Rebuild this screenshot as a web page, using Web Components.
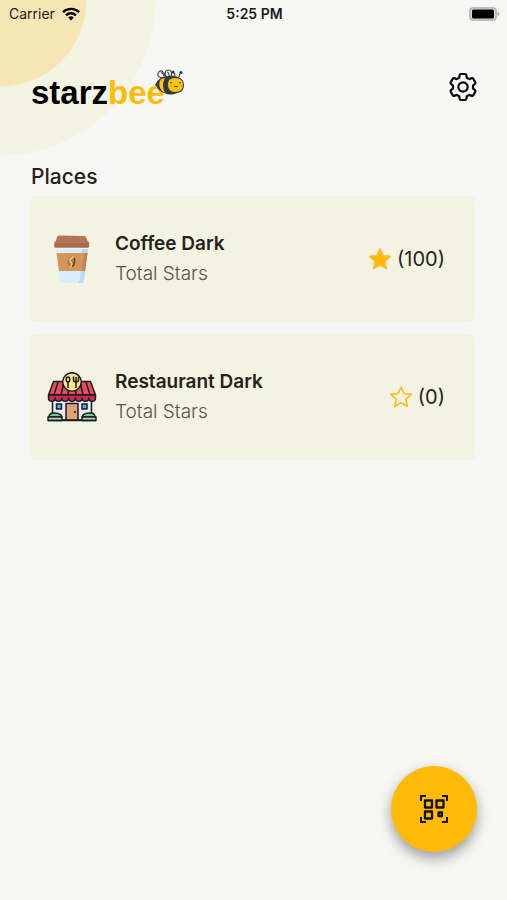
<!DOCTYPE html>
<html lang="en">
<head>
<meta charset="utf-8">
<meta name="viewport" content="width=device-width, initial-scale=1">
<title>Starzbee</title>
<style>
html, body { margin: 0; min-height: 100%; background: #f7f7f5; }
body { font-family: Inter, "Liberation Sans", sans-serif; color: #262219; }
</style>
</head>
<body>
<starz-app>
  <place-card name="Coffee Dark" stars="100" rated>
    <svg slot="icon" width="50" height="50" viewBox="0 0 50 50" aria-hidden="true">
      <path d="M9 15h32l-4 31q-.4 3-3 3H16q-3 0-3.300-3z" fill="#d9edfb"/>
      <path d="M35 15h6l-4 31q-.4 3-3 3h-4q3-1 3.300-5z" fill="#b4d8f5"/>
      <path d="M9.500 19h31L38 37H12z" fill="#d6955b"/>
      <path d="M37.500 19h3L38 37h-2.500z" fill="#c5834c"/>
      <path d="M12 1.500 37 2q2 0 2.500 2l1 3q1.500.5 1.700 2v3q0 1.500-1.700 1.500H9Q7.300 13.500 7.300 12V9q0-1.500 1.700-2l1-4q.4-1.500 2-1.500z" fill="#b47456"/>
      <path d="M8 9h34v3q0 1.500-1.700 1.500H9Q7.300 13.500 7.300 12z" fill="#a9694d"/>
      <ellipse cx="24.500" cy="28" rx="4" ry="5.500" fill="#b17b3d"/>
      <path d="M26 23q-5 3-2 5.500 2 2-1 5" fill="none" stroke="#f0cf91" stroke-width="1.500"/>
      <path d="M27.500 24q1 6-2.500 8.500" fill="none" stroke="#67452a" stroke-width="1.300"/>
    </svg>
  </place-card>
  <place-card name="Restaurant Dark" stars="0">
    <svg slot="icon" width="50" height="50" viewBox="0 0 50 50" aria-hidden="true" stroke="#1d1a22" stroke-width="1.500" stroke-linejoin="round">
      <path d="M5.500 24h39v24h-39z" fill="#eee9f3"/>
      <path d="M6.500 9.500h37L48.500 23H1.500z" fill="#e84b66"/>
      <path d="M11 10 7 23M17 10l-3 13M22 10l-1 13M28 10l1 13M33 10l3 13M39 10l4 13" fill="none"/>
      <path d="M1.500 23h47v3a3.300 3.300 0 0 1-6.700 0 3.300 3.300 0 0 1-6.700 0 3.300 3.300 0 0 1-6.700 0 3.300 3.300 0 0 1-6.800 0 3.300 3.300 0 0 1-6.700 0 3.300 3.300 0 0 1-6.700 0 3.300 3.300 0 0 1-6.700 0z" fill="#c5304f"/>
      <circle cx="25" cy="10" r="9.300" fill="#f8e58b"/>
      <ellipse cx="21" cy="7.500" rx="1.700" ry="2.500" fill="#fff7bd"/>
      <path d="M21 10v6M29 5v11M26.500 4.500V8q0 2 2.500 2t2.500-2V4.500" fill="none"/>
      <path d="M19 31.500h12V48H19z" fill="#dca477"/>
      <path d="M28 39v2" fill="none"/>
      <path d="M9.500 32h5v5h-5zM35 32h5v5h-5z" fill="#42bce5"/>
      <path d="M2 45q0-4 5-4 7 0 8 4zM35 45q1-4 8-4 5 0 5 4z" fill="#71ca9b"/>
      <path d="M1 45h14v3.500H1zM35 45h14v3.500H35z" fill="#a1ddb8"/>
      <path d="M1 48.500h48" fill="none"/>
    </svg>
  </place-card>
</starz-app>

<script>
class StatusBar extends HTMLElement {
  constructor() {
    super();
    this.attachShadow({ mode: "open" }).innerHTML = `
      <style>
        :host { display: grid; grid-template-columns: 1fr auto 1fr; align-items: center; height: 28px; padding: 0 7px 0 9px; color: #1c1b19; font-size: 14px; line-height: 20px; }
        .carrier { display: flex; align-items: center; gap: 7px; }
        .time { font-weight: 600; }
        .battery { justify-self: end; }
        svg { display: block; }
      </style>
      <div class="carrier"><span>Carrier</span>
        <svg width="18" height="14" viewBox="0 0 18 14" aria-hidden="true"><g fill="none" stroke="#000" stroke-width="2.400"><path d="M.9 5.200a11.500 11.500 0 0 1 16.200 0M4 8.300a7.100 7.100 0 0 1 10 0"/></g><path d="M6.200 10.600a4 4 0 0 1 5.600 0L9 13.500z"/></svg>
      </div>
      <span class="time">5:25 PM</span>
      <svg class="battery" width="31" height="14" viewBox="0 0 31 14" aria-hidden="true"><rect x=".8" y=".8" width="26.400" height="12.400" rx="3.500" fill="#d6d6d3" stroke="#adadab" stroke-width="1.200"/><rect x="3" y="2.500" width="22" height="9" rx="1.500"/><path d="M28.500 4.500q4 2.500 0 5z" fill="#adadab"/></svg>`;
  }
}
customElements.define("status-bar", StatusBar);

class BrandLogo extends HTMLElement {
  constructor() {
    super();
    this.attachShadow({ mode: "open" }).innerHTML = `
      <style>
        :host { display: block; position: relative; padding-top: 3px; font: bold 33px/36px "Liberation Sans", Arial, sans-serif; color: #000; }
        .bee { color: #ffbb0b; }
        svg { position: absolute; right: -20px; top: -3px; }
      </style>
      <span>starz<span class="bee">bee</span></span>
      <svg width="31" height="28" viewBox="0 0 31 28" aria-hidden="true">
        <g fill="#eeeeec" stroke="#404448" stroke-width="1.100"><path d="M10 9Q3 9 4 4.500 6-.5 10 4l2 5M12 8Q10 1 14 1q5 0 3 7"/><path d="M7 4q2-1 3 3M13 3q2 0 2 4" fill="none"/></g>
        <path d="M21 7q0-3-2-4M25 8q0-3 2-4" fill="none" stroke="#343b42" stroke-width="1.200"/><circle cx="19" cy="3" r="1.500" fill="#343b42"/><circle cx="27" cy="3.500" r="1.500" fill="#343b42"/>
        <path d="M1 16Q5 7 14 7q5-1 10 1 6 2 6 8 0 7-7 8-6 3-13 0-5-2-7-6z" fill="#303a43"/>
        <path d="M7 10q-4 6 1 12l3 2q-4-8 0-15z" fill="#ffc40d"/>
        <path d="M14 15q0-6 7-6 8 0 8 7 0 7-8 7-7 0-7-8z" fill="#ffc40d"/>
        <path d="M16 14q1-1 2 0M25 14q1-1 2 0M20 17q2 2 4 0" fill="none" stroke="#303a43" stroke-width="1"/>
        <path d="M16 17h2M26 17h2" stroke="#f98f32"/>
      </svg>`;
  }
}
customElements.define("brand-logo", BrandLogo);

class SettingsButton extends HTMLElement {
  constructor() {
    super();
    this.attachShadow({ mode: "open" }).innerHTML = `
      <style>
        :host { display: block; }
        button { display: block; padding: 0; border: 0; background: none; cursor: pointer; }
        svg { display: block; }
      </style>
      <button type="button" aria-label="Settings">
        <svg width="30" height="30" viewBox="-15 -15 30 30" fill="none" stroke="#0d0d0d" stroke-width="2.200" stroke-linejoin="round" aria-hidden="true"><path d="M-2.200-13H2.200Q3.200-13 3.300-12L3.800-9.300 6.200-7.900 8.800-8.900Q9.700-9.200 10.200-8.400L12.300-4.700Q12.800-3.800 12-3.200L10-1.400V1.400L12 3.200Q12.800 3.800 12.300 4.700L10.200 8.400Q9.700 9.200 8.800 8.900L6.200 7.900 3.800 9.300 3.300 12Q3.200 13 2.200 13H-2.200Q-3.200 13-3.300 12L-3.800 9.300-6.200 7.900-8.800 8.900Q-9.700 9.200-10.200 8.400L-12.300 4.700Q-12.800 3.800-12 3.200L-10 1.400V-1.400L-12-3.200Q-12.800-3.800-12.300-4.700L-10.200-8.400Q-9.700-9.200-8.800-8.900L-6.200-7.900-3.800-9.300-3.300-12Q-3.200-13-2.200-13z"/><circle r="4.700"/></svg>
      </button>`;
  }
}
customElements.define("settings-button", SettingsButton);

class StarCount extends HTMLElement {
  connectedCallback() {
    const fill = this.hasAttribute("filled") ? "#ffb90a" : "none";
    this.attachShadow({ mode: "open" }).innerHTML = `
      <style>
        :host { display: flex; align-items: center; gap: 5px; font-size: 20px; line-height: 28px; }
        svg { display: block; }
      </style>
      <svg width="24" height="24" viewBox="0 0 24 24" fill="${fill}" stroke="#fdbb1c" stroke-width="1.600" stroke-linejoin="round" aria-hidden="true"><path d="M12 2 15 8.700 22.300 9.400 16.800 14.200 18.400 21.500 12 17.700 5.600 21.500 7.200 14.200 1.700 9.400 9 8.700z"/></svg>
      <span><slot></slot></span>`;
  }
}
customElements.define("star-count", StarCount);

class PlaceCard extends HTMLElement {
  connectedCallback() {
    this.attachShadow({ mode: "open" }).innerHTML = `
      <style>
        :host { display: block; }
        article { display: flex; align-items: center; gap: 18px; padding: 33px 30px 33px 17px; border-radius: 5px; background: #f3f3e4; }
        .text { flex: 1; min-width: 0; }
        h3, p { margin: 0; font-size: 19px; line-height: 30px; }
        h3 { font-weight: 600; }
        p { font-weight: 300; color: #57544b; }
      </style>
      <article>
        <slot name="icon"></slot>
        <div class="text"><h3>${this.getAttribute("name")}</h3><p>Total Stars</p></div>
        <star-count ${this.hasAttribute("rated") ? "filled" : ""}>(${this.getAttribute("stars")})</star-count>
      </article>`;
  }
}
customElements.define("place-card", PlaceCard);

class ScanButton extends HTMLElement {
  constructor() {
    super();
    this.attachShadow({ mode: "open" }).innerHTML = `
      <style>
        :host { display: block; }
        button { display: grid; place-items: center; width: 86px; height: 86px; padding: 0; border: 0; border-radius: 50%; background: #ffba08; box-shadow: 0 6px 14px rgba(0,0,0,.38); cursor: pointer; }
      </style>
      <button type="button" aria-label="Scan QR code">
        <svg width="30" height="30" viewBox="0 0 30 30" fill="none" stroke="#120f05" stroke-width="2" aria-hidden="true"><path d="M2 7V2h5M23 2h5v5M28 23v5h-5M7 28H2v-5"/><g stroke-width="2.300" stroke-linejoin="round"><path d="M6 6.500h7v7H6zM17.500 6.500h7v7h-7zM6 17.500h7v7H6z"/><path d="M19.500 18.500h3.500v3.500h-3.500z"/></g></svg>
      </button>`;
  }
}
customElements.define("scan-button", ScanButton);

class StarzApp extends HTMLElement {
  constructor() {
    super();
    this.attachShadow({ mode: "open" }).innerHTML = `
      <style>
        :host { display: block; min-height: 100vh; background: radial-gradient(circle at 0 0, #f6e6b5 86px, #f4f4e4 87px, #f4f4e4 155px, transparent 156px); }
        header { display: flex; align-items: flex-start; justify-content: space-between; padding: 44px 29px 0 31px; }
        main { padding: 51px 32px 130px 30px; }
        h2 { margin: 0 0 4px 1px; font-size: 21px; line-height: 30px; font-weight: 500; }
        .places { display: flex; flex-direction: column; gap: 12px; }
        scan-button { position: fixed; right: 30px; bottom: 48px; }
      </style>
      <status-bar></status-bar>
      <header><brand-logo></brand-logo><settings-button></settings-button></header>
      <main><h2>Places</h2><div class="places"><slot></slot></div></main>
      <scan-button></scan-button>`;
  }
}
customElements.define("starz-app", StarzApp);
</script>
</body>
</html>
